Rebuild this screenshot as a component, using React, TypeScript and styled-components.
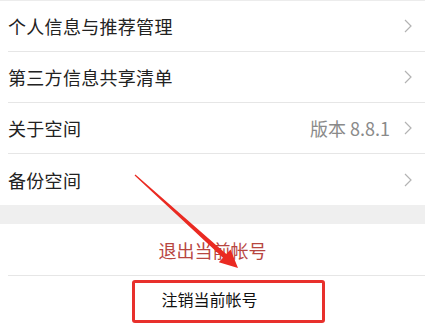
import React from "react";
import styled, { createGlobalStyle } from "styled-components";

const Global = createGlobalStyle`
  html, body { margin: 0; padding: 0; background: #ffffff; }
  body { font-family: "Noto Sans CJK SC", "Noto Sans", sans-serif; }
`;

const Page = styled.div`
  position: relative;
  width: 425px;
  height: 325px;
  overflow: hidden;
  background: #ffffff;
`;

const List = styled.div`
  display: flex;
  flex-direction: column;
  padding-left: 8px;
  border-top: 1px solid #ececec;
`;

const Row = styled.div<{ $last?: boolean }>`
  display: flex;
  align-items: center;
  height: ${(p) => (p.$last ? "51px" : "50px")};
  border-bottom: ${(p) => (p.$last ? "none" : "1px solid #e6e6e6")};
  padding-right: 12px;
`;

const Label = styled.span`
  flex: 1;
  font-size: 18px;
  color: #222222;
  letter-spacing: 0.3px;
`;

const Value = styled.span`
  font-size: 18px;
  color: #8a8a8a;
  margin-right: 13px;
`;

const Chevron = () => (
  <svg width="10" height="16" viewBox="0 0 10 16">
    <path d="M2 2 L8 8 L2 14" fill="none" stroke="#b3b3b3" strokeWidth="1.2" />
  </svg>
);

const Gap = styled.div`
  height: 19px;
  background: #efefef;
`;

const ActionRow = styled.div<{ $divider?: boolean }>`
  display: flex;
  align-items: center;
  justify-content: center;
  height: ${(p) => (p.$divider ? "51px" : "50px")};
  margin-left: 8px;
  border-bottom: ${(p) => (p.$divider ? "1px solid #e6e6e6" : "none")};
`;

const LogoutText = styled.span`
  font-size: 18px;
  color: #b8463f;
  margin-left: -8px;
`;

const CancelText = styled.span`
  font-size: 16px;
  color: #111111;
  margin-left: -14px;
  margin-top: -4px;
`;

const HighlightBox = styled.div`
  position: absolute;
  left: 132px;
  top: 280px;
  width: 187px;
  height: 37px;
  border: 3px solid #e8302c;
  border-radius: 3px;
  pointer-events: none;
`;

const ArrowSvg = styled.svg`
  position: absolute;
  left: 0;
  top: 0;
  pointer-events: none;
`;

const rows = [
  { label: "个人信息与推荐管理" },
  { label: "第三方信息共享清单" },
  { label: "关于空间", value: "版本 8.8.1" },
  { label: "备份空间" },
];

export default function App() {
  return (
    <>
      <Global />
      <Page>
        <List>
          {rows.map((r, i) => (
            <Row key={r.label} $last={i === rows.length - 1}>
              <Label>{r.label}</Label>
              {r.value && <Value>{r.value}</Value>}
              <Chevron />
            </Row>
          ))}
        </List>
        <Gap />
        <ActionRow $divider>
          <LogoutText>退出当前帐号</LogoutText>
        </ActionRow>
        <ActionRow>
          <CancelText>注销当前帐号</CancelText>
        </ActionRow>
        <HighlightBox />
        <ArrowSvg width="425" height="325" viewBox="0 0 425 325">
          <polygon
            points="135.4,174.6 226.3,254 230.5,249.5 238,268 218.8,262.2 222.9,257.8 134.6,175.4"
            fill="#ea2a22"
          />
        </ArrowSvg>
      </Page>
    </>
  );
}
